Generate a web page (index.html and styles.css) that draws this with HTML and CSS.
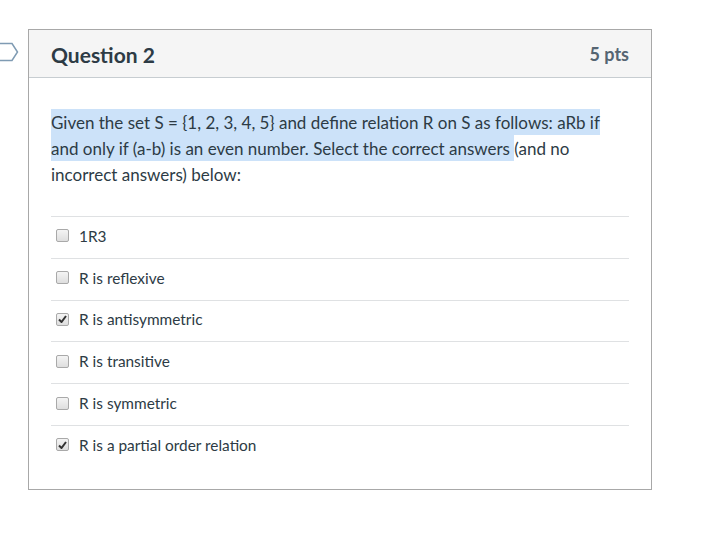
FILE: index.html
```html
<!DOCTYPE html>
<html>
<head>
<meta charset="utf-8">
<link rel="stylesheet" href="styles.css">
</head>
<body>
<div class="page">
  <svg class="flag" width="19" height="20" viewBox="0 0 19 20">
    <path d="M-6 1.5 H12 L17.5 10 L12 18.5 H-6" fill="#fff" stroke="#7f9bb3" stroke-width="1.5"/>
  </svg>
  <div class="card">
    <div class="card-head">
      <span class="q-title">Question 2</span>
      <span class="q-pts">5 pts</span>
    </div>
    <div class="card-body">
      <p class="q-text"><span class="sel">Given the set S = {1, 2, 3, 4, 5} and define relation R on S as follows: aRb if and only if (a-b) is an even number. Select the correct answers </span>(and no incorrect answers) below:</p>
      <ul class="answers">
        <li class="answer"><span class="cb"></span><span>1R3</span></li>
        <li class="answer"><span class="cb"></span><span>R is reflexive</span></li>
        <li class="answer"><span class="cb checked"><svg width="9" height="8" viewBox="0 0 9 8"><path d="M1 4.5 L3.5 7 L8 1" fill="none" stroke="#333" stroke-width="2"/></svg></span><span>R is antisymmetric</span></li>
        <li class="answer"><span class="cb"></span><span>R is transitive</span></li>
        <li class="answer"><span class="cb"></span><span>R is symmetric</span></li>
        <li class="answer"><span class="cb checked"><svg width="9" height="8" viewBox="0 0 9 8"><path d="M1 4.5 L3.5 7 L8 1" fill="none" stroke="#333" stroke-width="2"/></svg></span><span>R is a partial order relation</span></li>
      </ul>
    </div>
  </div>
</div>
</body>
</html>
```
FILE: styles.css
```css
html, body {
  margin: 0;
  padding: 0;
  background: #fff;
}
body {
  font-family: Lato, "Liberation Sans", sans-serif;
  color: #2d3b45;
}
.page {
  display: flex;
  align-items: flex-start;
  padding-top: 29px;
}
.flag {
  display: block;
  margin-top: 13px;
  flex: none;
}
.card {
  margin-left: 9px;
  width: 622px;
  border: 1px solid #a8a8a8;
}
.card-head {
  display: flex;
  justify-content: space-between;
  align-items: center;
  box-sizing: border-box;
  height: 48px;
  padding: 1px 22px 0;
  background: #f5f5f5;
  border-bottom: 1px solid #c7cdd1;
}
.q-title {
  font-weight: 700;
  font-size: 21px;
}
.q-pts {
  font-weight: 700;
  font-size: 18px;
  color: #556572;
}
.card-body {
  padding: 32px 22px 22px;
}
.q-text {
  margin: 0 0 28px;
  font-size: 17px;
  line-height: 26px;
}
.sel {
  background: #cce2f9;
  padding: 3px 0 2px;
}
.answers {
  list-style: none;
  margin: 0;
  padding: 0;
}
.answer {
  display: flex;
  align-items: center;
  gap: 10px;
  box-sizing: border-box;
  height: 41.8px;
  padding: 0 0 3px 5px;
  border-top: 1px solid #dfe1e3;
  font-size: 15.4px;
}
.cb {
  width: 11px;
  height: 11px;
  border: 1px solid #a9a9a9;
  border-radius: 2px;
  background: linear-gradient(#f4f4f4, #dedede);
  display: flex;
  align-items: center;
  justify-content: center;
  flex: none;
}
.cb svg {
  display: block;
}
```
